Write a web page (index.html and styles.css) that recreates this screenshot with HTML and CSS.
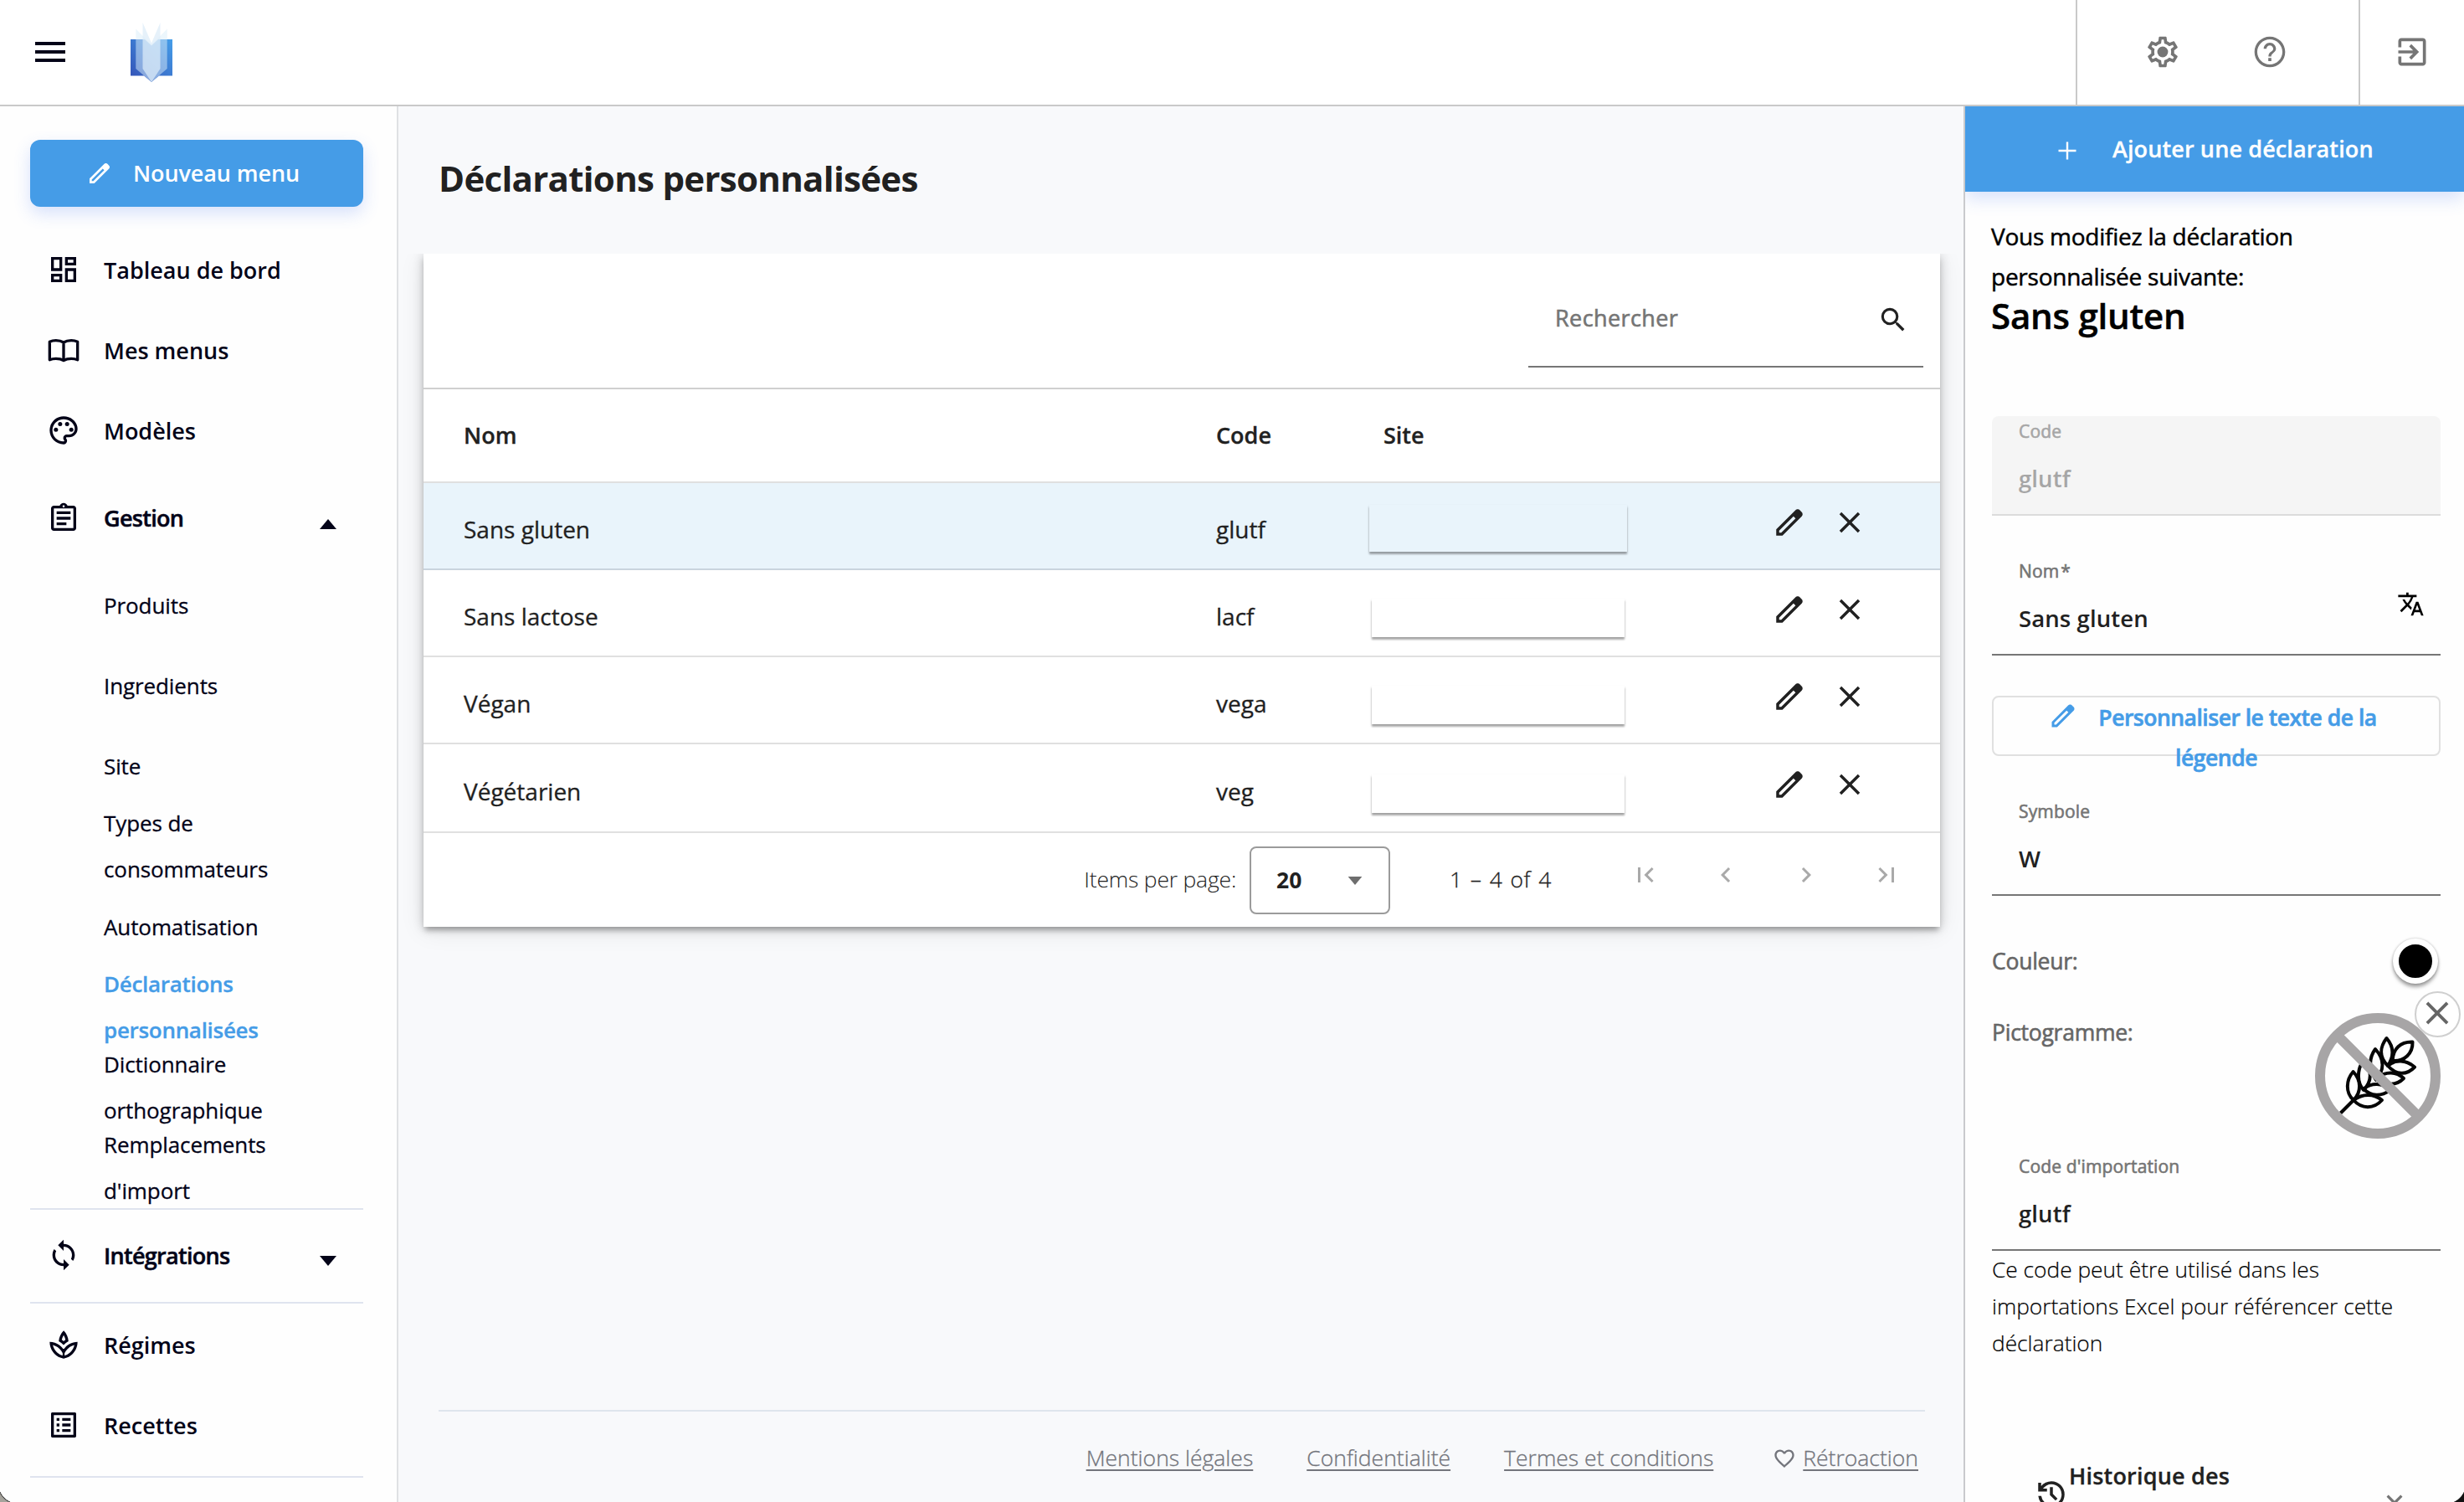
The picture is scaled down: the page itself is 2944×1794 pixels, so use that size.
FILE: index.html
```html
<!DOCTYPE html>
<html lang="fr">
<head>
    <meta charset="UTF-8">
    <meta name="viewport" content="width=device-width, initial-scale=1.0">
    <title>Déclarations personnalisées</title>
    <link rel="stylesheet" href="styles.css">
</head>
<body>

    <svg class="sprite" width="0" height="0">
        <symbol id="i-edit" viewBox="0 0 24 24"><path fill-rule="evenodd" d="M3 21v-4.25L16.2 3.575c.2-.183.42-.325.663-.425.24-.1.5-.15.762-.15s.525.05.775.15c.25.1.467.25.65.45L20.425 5c.2.183.346.4.438.65a2.1 2.1 0 0 1 0 1.513c-.092.24-.238.462-.438.662L7.25 21H3zM5 19h1.425L16.2 9.225 14.775 7.8 5 17.575V19z"/></symbol>
        <symbol id="i-close" viewBox="0 0 24 24"><path d="M19 6.41L17.59 5 12 10.59 6.41 5 5 6.41 10.59 12 5 17.59 6.41 19 12 13.41 17.59 19 19 17.59 13.41 12z"/></symbol>
        <symbol id="i-caret" viewBox="0 0 20 12"><path d="M0 0h20L10 12z"/></symbol>
    </svg>

    <header class="topbar">
        <svg class="menu-icon" viewBox="0 0 24 24"><path d="M3 18h18v-2H3v2zm0-5h18v-2H3v2zm0-7v2h18V6H3z"/></svg>
        <svg class="logo" viewBox="0 0 50 72">
            <defs>
                <linearGradient id="cover" x1="0" y1="1" x2="1" y2="0">
                    <stop offset="0" stop-color="#3350b5"/>
                    <stop offset="1" stop-color="#459ee9"/>
                </linearGradient>
            </defs>
            <path d="M0 20h17l8 7.500 8-7.500h17v43.500H34L25 71l-9-7.500H0z" fill="url(#cover)"/>
            <path d="M6.300 7.500L25 26.500 43.700 7.500V55L25 71 6.300 55z" fill="#d9eef9" opacity=".5"/>
            <path d="M14.500 0L25 24.500 35.500 0V55L25 71 14.500 55z" fill="#dcecf8" opacity=".72"/>
        </svg>
        <div class="topbar-group">
            <svg viewBox="0 0 24 24"><path fill-rule="evenodd" d="M19.430 12.980c.04-.32.07-.64.07-.98s-.03-.66-.07-.98l2.110-1.650c.19-.15.24-.42.12-.64l-2-3.460c-.12-.22-.39-.3-.61-.22l-2.490 1c-.52-.4-1.080-.73-1.690-.98l-.38-2.650C14.460 2.180 14.250 2 14 2h-4c-.25 0-.46.18-.49.42l-.38 2.650c-.61.25-1.170.59-1.690.98l-2.490-1c-.23-.09-.49 0-.61.22l-2 3.460c-.13.22-.07.49.12.64l2.110 1.650c-.04.32-.07.65-.07.98s.03.66.07.98l-2.110 1.650c-.19.15-.24.42-.12.64l2 3.460c.12.22.39.3.61.22l2.490-1c.52.4 1.080.73 1.690.98l.38 2.650c.03.24.24.42.49.42h4c.25 0 .46-.18.49-.42l.38-2.650c.61-.25 1.170-.59 1.690-.98l2.490 1c.23.09.49 0 .61-.22l2-3.460c.12-.22.07-.49-.12-.64l-2.110-1.650zm-1.980-1.710c.04.31.05.52.05.73s-.02.43-.05.73l-.14 1.130.89.7 1.080.84-.7 1.210-1.270-.51-1.040-.42-.9.68c-.43.32-.84.56-1.250.73l-1.060.43-.16 1.130L12.700 20h-1.400l-.35-2.480-1.060-.43c-.43-.18-.83-.41-1.230-.71l-.91-.7-1.060.43-1.270.51-.7-1.210 1.080-.84.89-.7-.14-1.130c-.03-.31-.05-.54-.05-.74s.02-.43.05-.73l.14-1.130-.89-.7-1.080-.84.7-1.210 1.270.51 1.040.42.9-.68c.43-.32.84-.56 1.250-.73l1.060-.43.16-1.130L11.300 4h1.390l.35 2.480 1.060.43c.43.18.83.41 1.230.71l.91.7 1.060-.43 1.270-.51.7 1.210-1.070.85-.89.7.14 1.130z"/><circle cx="12" cy="12" r="3.500"/></svg>
            <svg viewBox="0 0 24 24"><path d="M11 18h2v-2h-2v2zm1-16C6.480 2 2 6.480 2 12s4.480 10 10 10 10-4.480 10-10S17.520 2 12 2zm0 18.200c-4.500 0-8.200-3.700-8.200-8.200S7.500 3.800 12 3.800s8.200 3.700 8.200 8.200-3.700 8.200-8.200 8.200zM12 6c-2.210 0-4 1.790-4 4h1.800c0-1.200 1-2.200 2.200-2.200s2.200 1 2.200 2.200c0 2-3.100 1.750-3.100 5h1.800c0-2.250 3.100-2.500 3.100-5 0-2.210-1.790-4-4-4z"/></svg>
        </div>
        <div class="topbar-group exit">
            <svg viewBox="0 0 24 24"><path d="M10.090 15.590L11.500 17l5-5-5-5-1.410 1.410L12.670 11H3v2h9.670l-2.580 2.590zM19 3H5c-1.110 0-2 .9-2 2v4h2V5h14v14H5v-4H3v4c0 1.100.89 2 2 2h14c1.100 0 2-.9 2-2V5c0-1.100-.9-2-2-2z"/></svg>
        </div>
    </header>

    <div class="layout">
        <nav class="sidebar">
            <a class="new-menu"><svg><use href="#i-edit"/></svg><span>Nouveau menu</span></a>

            <a class="nav-item"><svg viewBox="0 0 24 24"><path d="M19 5v2h-4V5h4M9 5v6H5V5h4m10 8v6h-4v-6h4M9 17v2H5v-2h4M21 3h-8v6h8V3zM11 3H3v10h8V3zm10 8h-8v10h8V11zm-10 4H3v6h8v-6z"/></svg>Tableau de bord</a>
            <a class="nav-item"><svg class="line" viewBox="0 0 24 24"><path d="M12 6.600C10.600 5.700 8.600 5.200 6.500 5.200 4.700 5.200 3.200 5.600 2 6.200V19.100c1.300-.6 2.800-.9 4.500-.9 2 0 4 .4 5.500 1.300 1.500-.9 3.500-1.300 5.500-1.300 1.700 0 3.200.3 4.500.9V6.200c-1.200-.6-2.700-1-4.500-1-2.100 0-4.100.5-5.500 1.400v12.900"/></svg>Mes menus</a>
            <a class="nav-item"><svg viewBox="0 0 24 24"><path d="M12 22C6.490 22 2 17.510 2 12S6.490 2 12 2s10 4.040 10 9c0 3.310-2.690 6-6 6h-1.770c-.28 0-.5.22-.5.5 0 .12.05.23.13.33.41.47.64 1.060.64 1.670A2.500 2.500 0 0 1 12 22zm0-18c-4.410 0-8 3.590-8 8s3.590 8 8 8c.28 0 .5-.22.5-.5a.54.54 0 0 0-.14-.35c-.41-.46-.63-1.050-.63-1.650a2.500 2.500 0 0 1 2.500-2.500H16c2.210 0 4-1.790 4-4 0-3.860-3.590-7-8-7z"/><circle cx="6.500" cy="11.500" r="1.500"/><circle cx="9.500" cy="7.500" r="1.500"/><circle cx="14.500" cy="7.500" r="1.500"/><circle cx="17.500" cy="11.500" r="1.500"/></svg>Modèles</a>
            <a class="nav-item group open"><svg viewBox="0 0 24 24"><path d="M7 15h7v2H7zm0-4h10v2H7zm0-4h10v2H7zm12-4h-4.180C14.400 1.840 13.300 1 12 1s-2.400.84-2.820 2H5c-1.100 0-2 .9-2 2v14c0 1.100.9 2 2 2h14c1.100 0 2-.9 2-2V5c0-1.100-.9-2-2-2zm-7-.25c.41 0 .75.34.75.75s-.34.75-.75.75-.75-.34-.75-.75.34-.75.75-.75zM19 19H5V5h14v14z"/></svg>Gestion<svg class="caret"><use href="#i-caret"/></svg></a>

            <a class="sub-item">Produits</a>
            <a class="sub-item">Ingredients</a>
            <a class="sub-item">Site</a>
            <a class="sub-item">Types de<br>consommateurs</a>
            <a class="sub-item">Automatisation</a>
            <a class="sub-item active">Déclarations<br>personnalisées</a>
            <a class="sub-item">Dictionnaire<br>orthographique</a>
            <a class="sub-item">Remplacements<br>d'import</a>

            <div class="nav-block integrations">
                <a class="nav-item group"><svg viewBox="0 0 24 24"><path d="M12 4V1L8 5l4 4V6c3.310 0 6 2.690 6 6 0 1.010-.25 1.970-.7 2.800l1.460 1.460C19.540 15.030 20 13.570 20 12c0-4.420-3.580-8-8-8zm0 14c-3.310 0-6-2.690-6-6 0-1.010.25-1.970.7-2.800L5.240 7.740C4.460 8.970 4 10.430 4 12c0 4.420 3.580 8 8 8v3l4-4-4-4v3z"/></svg>Intégrations<svg class="caret"><use href="#i-caret"/></svg></a>
            </div>
            <div class="nav-block diets">
                <a class="nav-item"><svg viewBox="0 0 24 24"><path d="M15.490 9.630c-.18-2.790-1.310-5.510-3.430-7.630-2.140 2.140-3.320 4.860-3.550 7.630 1.280.68 2.460 1.560 3.490 2.630 1.030-1.060 2.210-1.940 3.490-2.630zm-3.440-4.440c.63 1.030 1.070 2.180 1.300 3.380-.47.3-.91.63-1.340.98-.42-.34-.87-.67-1.330-.97.25-1.200.71-2.350 1.370-3.390zM12 15.450c-.82-1.250-1.860-2.340-3.060-3.200-.13-.09-.27-.16-.4-.26.130.09.27.17.390.25C6.980 10.830 4.590 10 2 10c0 5.320 3.360 9.820 8.030 11.490.63.23 1.290.4 1.970.51.68-.12 1.330-.29 1.970-.51C18.640 19.820 22 15.320 22 10c-4.180 0-7.850 2.170-10 5.450zm1.320 4.150c-.44.15-.88.27-1.330.37-.44-.09-.87-.21-1.280-.36-3.290-1.180-5.700-3.990-6.450-7.350 1.100.26 2.150.71 3.120 1.330l-.02.01c.13.09.26.18.39.25l.07.04c.99.72 1.840 1.610 2.510 2.650L12 19.100l1.670-2.550c.69-1.050 1.550-1.950 2.530-2.660l.07-.05c.09-.05.18-.11.27-.17l-.01-.02c.98-.65 2.070-1.130 3.210-1.400-.75 3.370-3.150 6.180-6.420 7.350z"/><path d="M11.300 15h1.400v6h-1.400z"/></svg>Régimes</a>
                <a class="nav-item"><svg viewBox="0 0 24 24"><path d="M11 7h6v2h-6zm0 4h6v2h-6zm0 4h6v2h-6zM7 7h2v2H7zm0 4h2v2H7zm0 4h2v2H7zM20.100 3H3.900c-.5 0-.9.4-.9.9v16.200c0 .4.400.9.900.9h16.200c.4 0 .9-.5.900-.9V3.900c0-.5-.5-.9-.9-.9zM19 19H5V5h14v14z"/></svg>Recettes</a>
            </div>
            <div class="nav-block"></div>
        </nav>

        <main class="content">
            <h1>Déclarations personnalisées</h1>

            <div class="card-clip">
                <section class="card">
                    <div class="card-search">
                        <div class="search">
                            <span>Rechercher</span>
                            <svg viewBox="0 0 24 24"><path d="M15.500 14h-.79l-.28-.27A6.471 6.471 0 0 0 16 9.500 6.500 6.500 0 1 0 9.500 16c1.610 0 3.090-.59 4.230-1.570l.27.28v.79l5 4.990L20.490 19l-4.990-5zm-6 0C7.010 14 5 11.990 5 9.500S7.010 5 9.500 5 14 7.010 14 9.500 11.990 14 9.500 14z"/></svg>
                        </div>
                    </div>
                    <div class="row head">
                        <span>Nom</span><span>Code</span><span>Site</span><span></span>
                    </div>
                    <div class="row selected">
                        <span>Sans gluten</span><span>glutf</span>
                        <span class="site"><i class="field-box wide"></i></span>
                        <span class="actions"><svg><use href="#i-edit"/></svg><svg><use href="#i-close"/></svg></span>
                    </div>
                    <div class="row">
                        <span>Sans lactose</span><span>lacf</span>
                        <span class="site"><i class="field-box"></i></span>
                        <span class="actions"><svg><use href="#i-edit"/></svg><svg><use href="#i-close"/></svg></span>
                    </div>
                    <div class="row">
                        <span>Végan</span><span>vega</span>
                        <span class="site"><i class="field-box"></i></span>
                        <span class="actions"><svg><use href="#i-edit"/></svg><svg><use href="#i-close"/></svg></span>
                    </div>
                    <div class="row last">
                        <span>Végétarien</span><span>veg</span>
                        <span class="site"><i class="field-box"></i></span>
                        <span class="actions"><svg><use href="#i-edit"/></svg><svg><use href="#i-close"/></svg></span>
                    </div>
                    <div class="paginator">
                        <span class="per-page">Items per page:</span>
                        <div class="page-size">20<svg><use href="#i-caret"/></svg></div>
                        <span class="range">1 – 4 of 4</span>
                        <div class="pager">
                            <svg viewBox="0 0 24 24"><path d="M18.410 16.590L13.820 12l4.590-4.590L17 6l-6 6 6 6zM6 6h2v12H6z"/></svg>
                            <svg viewBox="0 0 24 24"><path d="M15.410 7.410L14 6l-6 6 6 6 1.410-1.410L10.830 12z"/></svg>
                            <svg viewBox="0 0 24 24"><path d="M10 6L8.590 7.410 13.170 12l-4.580 4.590L10 18l6-6z"/></svg>
                            <svg viewBox="0 0 24 24"><path d="M5.590 7.410L10.180 12l-4.590 4.590L7 18l6-6-6-6zM16 6h2v12h-2z"/></svg>
                        </div>
                    </div>
                </section>
            </div>

            <footer class="footer">
                <a>Mentions légales</a>
                <a>Confidentialité</a>
                <a>Termes et conditions</a>
                <div class="feedback">
                    <svg viewBox="0 0 24 24"><path d="M16.500 3c-1.740 0-3.410.81-4.500 2.090C10.910 3.810 9.240 3 7.500 3 4.420 3 2 5.420 2 8.500c0 3.780 3.400 6.860 8.550 11.540L12 21.350l1.450-1.320C18.600 15.360 22 12.280 22 8.500 22 5.420 19.580 3 16.500 3zm-4.400 15.550l-.1.100-.1-.1C7.140 14.240 4 11.390 4 8.500 4 6.500 5.500 5 7.500 5c1.540 0 3.040.99 3.570 2.360h1.870C13.460 5.990 14.960 5 16.500 5c2 0 3.500 1.500 3.500 3.500 0 2.890-3.140 5.740-7.900 10.050z"/></svg>
                    <a>Rétroaction</a>
                </div>
            </footer>
        </main>

        <aside class="panel">
            <div class="add-button">
                <svg viewBox="0 0 24 24"><path d="M19 12.800h-6.200V19h-1.600v-6.200H5v-1.600h6.200V5h1.600v6.200H19z"/></svg>
                <span>Ajouter une déclaration</span>
            </div>
            <div class="intro">
                <p>Vous modifiez la déclaration<br>personnalisée suivante:</p>
                <h2>Sans gluten</h2>
            </div>
            <div class="form">
                <div class="field disabled">
                    <label>Code</label>
                    <div class="value">glutf</div>
                </div>
                <div class="field name">
                    <label>Nom<span class="star">*</span></label>
                    <div class="value">Sans gluten</div>
                    <svg class="translate" viewBox="0 0 24 24"><path d="M12.870 15.070l-2.540-2.510.03-.03A17.520 17.520 0 0 0 14.070 6H17V4h-7V2H8v2H1v1.990h11.170C11.500 7.920 10.440 9.750 9 11.350 8.070 10.320 7.300 9.190 6.690 8h-2c.73 1.630 1.730 3.170 2.980 4.560l-5.090 5.020L4 19l5-5 3.110 3.110.76-2.040zM18.500 10h-2L12 22h2l1.120-3h4.750L21 22h2l-4.500-12zm-2.620 7l1.620-4.330L19.120 17h-3.240z"/></svg>
                </div>
                <div class="legend-button"><svg><use href="#i-edit"/></svg>Personnaliser le texte de la<br>légende</div>
                <div class="field symbol">
                    <label>Symbole</label>
                    <div class="value">W</div>
                </div>
                <div class="line-row color-row">
                    <span>Couleur:</span>
                    <i class="swatch"></i>
                </div>
                <div class="line-row picto-row">
                    <span>Pictogramme:</span>
                    <div class="picto">
                        <svg class="picto-img" viewBox="0 0 150 150">
                            <g fill="none" stroke="#050505" stroke-width="4" stroke-linejoin="round">
                                <path d="M30.500 119.500L47 103"/>
                                <path d="M45.600 70C37 80 36 95 46 104 56 94 55 80 45.600 70z"/>
                                <path d="M57.500 57C50 68 50 83 58 92 68 82 69 68 57.500 57z"/>
                                <path d="M72 43C64 54 64 68 73 80 83 68 83 55 72 43z"/>
                                <path d="M85.500 30C77 41 77 53 87 63 95 51 94 40 85.500 30z"/>
                                <path d="M116.500 34.500C102 34 93 43 92.600 57 107 58 117 48 116.500 34.500z"/>
                                <path d="M87 63C96 55 109 56 119 64.500 109 75 97 74 87 63z"/>
                                <path d="M75 77.500C85 69 97 70 106 78 97 87 85 87 75 77.500z"/>
                                <path d="M58 90.500C68 83 80 83 90 92 79 100 67 100 58 90.500z"/>
                                <path d="M46 104C57 96 70 96 80 104 70 115 56 115 46 104z"/>
                            </g>
                            <g fill="none" stroke="#a7a5a6" stroke-width="12">
                                <circle cx="75" cy="75" r="69"/>
                                <path d="M29 29l92 92"/>
                            </g>
                        </svg>
                        <span class="remove"><svg><use href="#i-close"/></svg></span>
                    </div>
                </div>
                <div class="field import">
                    <label>Code d'importation</label>
                    <div class="value">glutf</div>
                </div>
                <p class="hint">Ce code peut être utilisé dans les<br>importations Excel pour référencer cette<br>déclaration</p>
            </div>
            <div class="history">
                <svg class="history-icon" viewBox="0 0 24 24"><path d="M12 21q-3.450 0-6.012-2.287T3.050 13H5.100q.35 2.600 2.313 4.300T12 19q2.925 0 4.962-2.037T19 12t-2.037-4.963T12 5q-1.725 0-3.225.8T6.250 8H9v2H3V4h2v2.350q1.275-1.600 3.113-2.475T12 3q1.875 0 3.513.713t2.850 1.924 1.925 2.850T21 12t-.712 3.513-1.925 2.850-2.850 1.925T12 21m2.800-4.800L11 12.400V7h2v4.600l3.200 3.200z"/></svg>
                <span>Historique des</span>
                <svg class="chevron" viewBox="0 0 24 24"><path d="M16.590 8.590L12 13.170 7.410 8.590 6 10l6 6 6-6z"/></svg>
            </div>
        </aside>
    </div>

</body>
</html>
```
FILE: styles.css
```css
* {
    box-sizing: border-box;
}
body {
    margin: 0;
    width: 2944px;
    height: 1794px;
    overflow: hidden;
    position: relative;
    font-family: "Open Sans", sans-serif;
    font-size: 27px;
    font-variant-ligatures: none;
    color: #212121;
    background: #fefefe;
}
/* rounded window corners */
body::before, body::after {
    content: "";
    position: absolute;
    bottom: 0;
    width: 14px;
    height: 14px;
    z-index: 5;
}
body::before {
    left: 0;
    background: radial-gradient(circle at 22px -8px, transparent 23.5px, #444 24px, #a5a39c 25.5px);
}
body::after {
    right: 0;
    background: radial-gradient(circle at -8px -8px, transparent 23.5px, #111 24.5px);
}
.sprite {
    position: absolute;
}
h1, h2, p {
    margin: 0;
}
svg {
    display: block;
    flex: none;
    fill: currentColor;
}

/* header */
.topbar {
    display: flex;
    align-items: center;
    height: 127px;
    padding-left: 36px;
    border-bottom: 2px solid #c9c9c9;
    background: #fff;
    color: #030318;
}
.menu-icon {
    width: 48px;
    height: 48px;
    margin-bottom: 1px;
}
.logo {
    width: 50px;
    height: 72px;
    margin-left: 72px;
}
.topbar-group {
    display: flex;
    align-items: center;
    gap: 84px;
    width: 338px;
    height: 100%;
    margin-left: auto;
    padding: 0 0 1px 80px;
    border-left: 2px solid #c9c9c9;
    color: #757575;
}
.topbar-group svg {
    width: 44px;
    height: 44px;
}
.topbar-group.exit {
    width: 126px;
    margin-left: 0;
    padding-left: 40px;
}

.layout {
    display: grid;
    grid-template-columns: 476px 1fr 598px;
    height: 1667px;
}

/* sidebar */
.sidebar {
    padding: 40px 40px 0 36px;
    border-right: 2px solid #dfe1e4;
    color: #030318;
    font-weight: 600;
    overflow: hidden;
}
.new-menu {
    display: flex;
    align-items: center;
    gap: 24px;
    height: 80px;
    margin-bottom: 27px;
    padding-left: 67px;
    border-radius: 12px;
    background: #459ce7;
    box-shadow: 0 8px 20px rgba(60, 110, 240, .2);
    color: #fff;
    letter-spacing: -.1px;
}
.new-menu span, .add-button span {
    padding-bottom: 2px;
}
.new-menu svg {
    width: 32px;
    height: 32px;
}
.nav-item {
    display: flex;
    align-items: center;
    height: 96px;
    padding-left: 20px;
}
.nav-item svg {
    width: 40px;
    height: 40px;
    margin-right: 28px;
}
.nav-item .line {
    fill: none;
    stroke: currentColor;
    stroke-width: 2;
    stroke-linejoin: round;
}
.nav-item.group {
    height: 113px;
    letter-spacing: -.7px;
    -webkit-text-stroke: .5px;
}
.nav-item.group .caret {
    width: 20px;
    height: 12px;
    margin: 14px 32px 0 auto;
}
.open .caret {
    transform: rotate(180deg);
}
.sub-item {
    display: flex;
    align-items: center;
    height: 96px;
    padding-left: 88px;
    font-size: 26px;
    font-weight: 400;
    line-height: 55px;
    letter-spacing: -.1px;
    -webkit-text-stroke: .3px;
}
.sub-item.active {
    color: #459ce7;
    font-weight: 600;
    letter-spacing: -.3px;
}
.nav-block {
    border-top: 2px solid #dfe4ef;
}
.integrations .nav-item.group {
    height: 108px;
    margin-bottom: 2px;
}
.diets {
    padding: 1px 0 13px;
}

/* content */
.content {
    display: flex;
    flex-direction: column;
    background: #f8f9fb;
    min-width: 0;
}
h1 {
    padding: 57px 48px 0;
    height: 176px;
    font-size: 42px;
    line-height: 58px;
    font-weight: 700;
    letter-spacing: -.7px;
}
.card-clip {
    padding: 0 28px 60px 30px;
    overflow: hidden;
}
.card {
    height: 804px;
    background: #fff;
    box-shadow: 0 6px 6px -2px rgba(0, 0, 0, .25), 0 2px 12px rgba(0, 0, 0, .2), 0 4px 28px rgba(0, 0, 0, .09);
}
.card-search {
    display: flex;
    justify-content: flex-end;
    height: 162px;
    padding: 26px 20px 0 0;
    border-bottom: 2px solid #d0d0d0;
}
.search {
    display: flex;
    align-items: center;
    justify-content: space-between;
    width: 472px;
    height: 110px;
    padding: 0 17px 4px 32px;
    border-bottom: 2px solid #767676;
    color: #757575;
    font-size: 27px;
    letter-spacing: .4px;
    -webkit-text-stroke: .6px;
}
.search span {
    padding-bottom: 3px;
}
.search svg {
    width: 38px;
    height: 38px;
    margin-top: 2px;
    color: #212121;
}
.row {
    display: grid;
    grid-template-columns: 899px 176px 481px 1fr;
    align-items: center;
    height: 104px;
    padding-left: 48px;
    border-bottom: 2px solid #e0e0e0;
    font-size: 28px;
}
.row > span {
    padding-top: 7px;
    -webkit-text-stroke: .3px;
}
.row.head {
    grid-template-columns: 899px 200px 1fr 1fr;
    height: 112px;
    font-size: 27px;
    font-weight: 600;
}
.row.head > span {
    padding: 0 0 2px;
}
.row.selected {
    background: #e9f4fb;
    border-color: #c9d4de;
}
.row.last {
    height: 106px;
}
.row > .site {
    align-self: end;
    padding: 0 0 22px 10px;
}
.row.selected > .site {
    padding: 0 0 20px 7px;
}
.field-box {
    display: block;
    width: 302px;
    height: 46px;
    background: #fff;
    box-shadow: 0 3px 2px rgba(0, 0, 0, .25), 0 2px 3px rgba(0, 0, 0, .18);
}
.field-box.wide {
    width: 308px;
    height: 56px;
    background: #e9f4fb;
}
.row > .actions {
    display: flex;
    gap: 30px;
    padding: 0 0 9px 7px;
}
.actions svg {
    width: 42px;
    height: 42px;
}
.paginator {
    display: flex;
    align-items: center;
    height: 110px;
    font-size: 26.500px;
    font-weight: 300;
}
.per-page {
    width: 971px;
    text-align: right;
    letter-spacing: -.2px;
}
.page-size {
    display: flex;
    align-items: center;
    justify-content: space-between;
    width: 168px;
    height: 81px;
    margin: 3px 71px 0 16px;
    padding: 0 30px 2px;
    border: 2px solid #9b9b9b;
    border-radius: 8px;
    font-weight: 700;
}
.page-size svg {
    width: 20px;
    height: 10px;
    margin-top: 2px;
    color: #6e6e6e;
}
.range {
    width: 216px;
    letter-spacing: .4px;
    word-spacing: 2px;
    -webkit-text-stroke: .3px;
}
.pager {
    display: flex;
    gap: 60px;
    padding-bottom: 10px;
    color: #a9a9a9;
}
.pager svg {
    width: 36px;
    height: 36px;
}
.footer {
    display: flex;
    justify-content: flex-end;
    margin: auto 46px 0 48px;
    height: 110px;
    padding: 35px 8px 0 0;
    border-top: 2px solid #dfe5ed;
    gap: 64px;
    color: #73757c;
    font-size: 26.5px;
    font-weight: 300;
    line-height: 40px;
}
.footer a {
    text-decoration: underline;
    text-underline-offset: 4px;
    -webkit-text-stroke: .3px;
}
.feedback {
    display: flex;
    gap: 8px;
    margin-left: 7px;
}
.feedback svg {
    width: 28px;
    height: 28px;
    margin-top: 7px;
}

/* right panel */
.panel {
    border-left: 2px solid #c9cacd;
    overflow: hidden;
    color: #000;
}
.add-button {
    display: flex;
    align-items: center;
    gap: 36px;
    height: 102px;
    padding-left: 104px;
    background: #459ce7;
    box-shadow: 0 8px 20px rgba(60, 110, 240, .2);
    color: #fff;
    font-weight: 600;
    letter-spacing: .12px;
    -webkit-text-stroke: .3px;
}
.add-button svg {
    width: 36px;
    height: 36px;
    margin-top: 3px;
}
.intro {
    height: 268px;
    padding: 29px 30px 0 31px;
}
.intro p {
    font-size: 28px;
    line-height: 48px;
    letter-spacing: -.25px;
    -webkit-text-stroke: .5px #000;
}
h2 {
    font-size: 42px;
    line-height: 46px;
    font-weight: 600;
    letter-spacing: -.2px;
    -webkit-text-stroke: .5px;
}
.form {
    padding: 0 28px 0 32px;
}
.field {
    position: relative;
    height: 119px;
    padding: 3px 32px 0;
    border-bottom: 2px solid #767676;
    color: #212121;
}
.field label {
    display: block;
    color: #757575;
    font-size: 21px;
    line-height: 30px;
    letter-spacing: .15px;
    -webkit-text-stroke: .6px;
}
.star {
    margin-left: 2px;
}
.value {
    margin-top: 17px;
    line-height: 50px;
    font-weight: 600;
    font-size: 27.5px;
    letter-spacing: .1px;
}
.disabled {
    background: #f5f5f5;
    border-color: #dcdcdc;
    border-radius: 8px 8px 0 0;
}
.disabled label, .disabled .value {
    color: #a6a6a6;
}
.field.name {
    margin-top: 48px;
}
.translate {
    position: absolute;
    right: 19px;
    top: 41px;
    width: 33px;
    height: 33px;
    color: #000;
}
.legend-button {
    height: 72px;
    margin-top: 48px;
    border: 2px solid #e0e0e0;
    border-radius: 8px;
    color: #459ce7;
    font-size: 26.500px;
    font-weight: 600;
    line-height: 48px;
    letter-spacing: -.45px;
    text-align: center;
    -webkit-text-stroke: .6px;
}
/* the right margin pulls the first line slightly left of center */
.legend-button svg {
    display: inline-block;
    width: 36px;
    height: 36px;
    margin: 0 24px 0 -9px;
    vertical-align: -6px;
    stroke: none;
    transform: translateX(0);
}
.legend-button {
    padding-right: 0;
}
.legend-button::first-line {
    letter-spacing: -.5px;
}
.field.symbol {
    margin-top: 48px;
}
.line-row {
    display: flex;
    justify-content: space-between;
    color: #666;
    font-size: 26.5px;
    letter-spacing: -.25px;
    -webkit-text-stroke: .6px;
}
.color-row {
    margin-top: 51px;
    height: 89px;
    padding-right: 3px;
    line-height: 54px;
}
.swatch {
    width: 54px;
    height: 54px;
    border: 7px solid #fff;
    border-radius: 50%;
    background: #000;
    box-shadow: 0 4px 4px rgba(0, 0, 0, .35), 0 0 3px rgba(0, 0, 0, .25);
}
.picto-row {
    height: 165px;
    line-height: 47px;
}
.picto {
    position: relative;
}
.picto-img {
    width: 150px;
    height: 150px;
}
.remove {
    position: absolute;
    right: -24px;
    top: -26px;
    width: 55px;
    height: 55px;
    border: 2px solid #cfcfcf;
    border-radius: 50%;
    background: #fff;
}
.remove svg {
    width: 46px;
    height: 46px;
    margin: 1px 2px;
}
.hint {
    font-size: 26.300px;
    line-height: 44px;
    font-weight: 300;
    -webkit-text-stroke: .2px;
}
.history {
    display: flex;
    height: 120px;
    margin-top: 112px;
    padding-left: 82px;
    color: #212121;
    font-weight: 600;
    line-height: 49px;
    letter-spacing: .2px;
    -webkit-text-stroke: .3px;
}
.history-icon {
    width: 42px;
    height: 42px;
    margin-top: 26px;
}
.chevron {
    width: 38px;
    height: 38px;
    margin: 34px 0 0 178px;
    color: #757575;
}
```
